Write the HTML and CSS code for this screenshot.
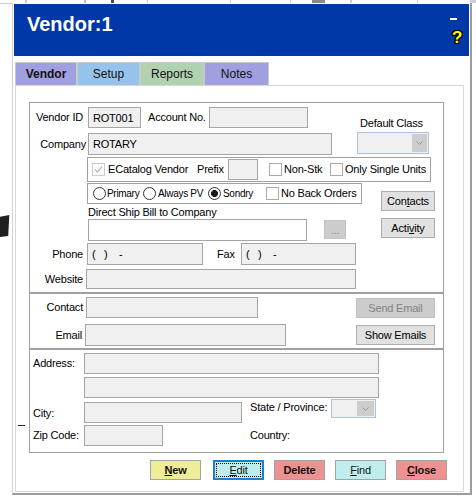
FILE: index.html
```html
<!DOCTYPE html>
<html lang="en">
<head>
<meta charset="utf-8">
<title>Vendor:1</title>
<link rel="stylesheet" href="styles.css">
</head>
<body>
<div class="top-strip"></div>
<div class="stage">
  <div class="gutter">
    <svg class="blot" width="10" height="23" viewBox="0 0 10 23"><polygon points="0,1.7 9.3,0 8.2,21 0,22" fill="#231f20"/></svg>
  </div>
  <div class="window">
    <div class="titlebar">
      <div class="title">Vendor:1</div>
      <div class="title-controls"><span class="minbar"></span><span class="help">?</span></div>
    </div>
    <div class="tabs">
      <div class="tab tab-vendor">Vendor</div>
      <div class="tab tab-setup">Setup</div>
      <div class="tab tab-reports">Reports</div>
      <div class="tab tab-notes">Notes</div>
    </div>
    <div class="panel">
      <div class="margin-col"><span class="stray-dash"></span></div>
      <div class="content">
        <div class="group g1">
          <div class="ab">
            <div class="ab-left">
              <div class="row r-a">
                <span class="lbl lbl-vid">Vendor ID</span>
                <span class="field f-vid">ROT001</span>
                <span class="lbl lbl-acct">Account No.</span>
                <span class="field f-acct"></span>
              </div>
              <div class="row r-b">
                <span class="lbl lbl-company">Company</span>
                <span class="field f-company">ROTARY</span>
              </div>
            </div>
            <div class="ab-right">
              <span class="lbl lbl-class">Default Class</span>
              <span class="combo combo-class"><span class="drop"><svg width="7" height="4" viewBox="0 0 7 4"><polyline points="0.5,0.5 3.5,3.5 6.5,0.5" fill="none" stroke="#9a9a9a" stroke-width="1"/></svg></span></span>
            </div>
          </div>
          <div class="optbox opt-cat">
            <span class="cb cb-dis"><svg width="11" height="11" viewBox="0 0 11 11"><polyline points="2,5.5 4.5,8 9,2.5" fill="none" stroke="#b9b9b9" stroke-width="1.2"/></svg></span>
            <span class="lbl lbl-ecat">ECatalog Vendor</span>
            <span class="lbl lbl-prefix">Prefix</span>
            <span class="field f-prefix"></span>
            <span class="cb cb-nonstk"></span>
            <span class="lbl lbl-nonstk">Non-Stk</span>
            <span class="cb"></span>
            <span class="lbl lbl-single">Only Single Units</span>
          </div>
          <div class="df">
            <div class="df-left">
              <div class="optbox opt-radio">
                <span class="radio r1"></span><span class="lbl small l-primary">Primary</span>
                <span class="radio"></span><span class="lbl small l-always">Always PV</span>
                <span class="radio on"></span><span class="lbl small l-sondry">Sondry</span>
                <span class="cb"></span><span class="lbl l-noback">No Back Orders</span>
              </div>
              <span class="lbl lbl-direct">Direct Ship Bill to Company</span>
              <div class="row r-f">
                <span class="field white f-direct"></span>
                <span class="btn btn-dots">...</span>
              </div>
            </div>
            <div class="df-right">
              <span class="btn btn-side btn-contacts">Con<u>t</u>acts</span>
              <span class="btn btn-side btn-activity">Acti<u>v</u>ity</span>
            </div>
          </div>
          <div class="row r-g">
            <span class="lbl lbl-phone">Phone</span>
            <span class="field f-phone">(   )    -</span>
            <span class="lbl lbl-fax">Fax</span>
            <span class="field f-fax">(   )    -</span>
          </div>
          <div class="row r-h">
            <span class="lbl lbl-web">Website</span>
            <span class="field f-web"></span>
          </div>
        </div>

        <div class="group g2">
          <div class="row r-contact">
            <span class="lbl lbl-contact">Contact</span>
            <span class="field f-contact"></span>
            <span class="btn btn-send">Send Email</span>
          </div>
          <div class="row r-email">
            <span class="lbl lbl-email">Email</span>
            <span class="field f-email"></span>
            <span class="btn btn-show">Show Emails</span>
          </div>
        </div>

        <div class="group g3">
          <div class="row r-addr1">
            <span class="lbl lbl-addr">Address:</span>
            <span class="field f-addr"></span>
          </div>
          <div class="row r-addr2">
            <span class="field f-addr"></span>
          </div>
          <div class="row r-city">
            <span class="lbl lbl-city">City:</span>
            <span class="field f-city"></span>
            <span class="lbl lbl-state">State / Province:</span>
            <span class="combo combo-state"><span class="drop"><svg width="7" height="4" viewBox="0 0 7 4"><polyline points="0.5,0.5 3.5,3.5 6.5,0.5" fill="none" stroke="#9a9a9a" stroke-width="1"/></svg></span></span>
          </div>
          <div class="row r-zip">
            <span class="lbl lbl-zip">Zip Code:</span>
            <span class="field f-zip"></span>
            <span class="lbl lbl-country">Country:</span>
          </div>
        </div>

        <div class="actions">
          <span class="abtn a-new"><u>N</u>ew</span>
          <span class="abtn a-edit"><span class="focus"><u>E</u>dit</span></span>
          <span class="abtn a-delete">Delete</span>
          <span class="abtn a-find"><u>F</u>ind</span>
          <span class="abtn a-close"><u>C</u>lose</span>
        </div>
      </div>
    </div>
  </div>
</div>
</body>
</html>
```

FILE: styles.css
```css
* { box-sizing: border-box; }
html, body { margin: 0; padding: 0; }
body {
  width: 476px;
  height: 502px;
  overflow: hidden;
  background: #fff;
  font-family: "Liberation Sans", Arial, "DejaVu Sans", sans-serif;
  font-size: 11px;
  letter-spacing: -0.2px;
  color: #000;
}

.top-strip {
  height: 3px;
  background: linear-gradient(to right,
    #fff 0 25px, #c9c9c9 25px 27px, #fff 27px 84px, #bdbdbd 84px 86px,
    #fff 86px 111px, #4a4a4a 111px 114px, #fff 114px 147px, #cfcfcf 147px 148px,
    #fff 148px 230px, #cfcfcf 230px 231px, #fff 231px 290px, #cfcfcf 290px 291px,
    #fff 291px 312px, #8a8a8a 312px 325px, #fff 325px 350px, #cfcfcf 350px 352px,
    #fff 352px 417px, #cfcfcf 417px 418px, #fff 418px 470px, #cfcfcf 470px 476px);
}

.stage { display: flex; }
.gutter { width: 12px; flex: none; border-top: 1px solid #d0d0d0; }
.blot { display: block; margin-top: 211px; }

.window {
  width: 460px;
  height: 492px;
  flex: none;
  border-left: 1px solid #d2d2d2;
  border-right: 2px solid #9c9c9c;
  border-bottom: 2px solid #9c9c9c;
  padding: 1px;
  background: #fff;
}

.titlebar {
  height: 52px;
  background: #0038a8;
  display: flex;
  justify-content: space-between;
  color: #fff;
}
.title {
  padding: 8px 0 0 13px;
  font-size: 20px;
  line-height: 24px;
  font-weight: bold;
  letter-spacing: 0;
}
.title-controls {
  width: 14px;
  margin-right: 5px;
  padding-top: 14px;
  display: flex;
  flex-direction: column;
  align-items: flex-start;
}
.minbar { width: 7px; height: 2px; background: #fff; }
.help {
  margin-top: 9px;
  margin-left: 2px;
  font-size: 17px;
  line-height: 18px;
  font-weight: bold;
  letter-spacing: 0;
  color: #ffff00;
  text-shadow: 1px 0 0 #000, -1px 0 0 #000, 0 1px 0 #000, 0 -1px 0 #000,
               1px 1px 0 #000, -1px -1px 0 #000, 1px -1px 0 #000, -1px 1px 0 #000;
}

.tabs { display: flex; margin: 6px 0 0 1px; height: 23px; }
.tab {
  height: 23px;
  border: 1px solid #c9c9c9;
  border-bottom: none;
  display: flex;
  align-items: center;
  justify-content: center;
  font-size: 12px;
  letter-spacing: 0;
  color: #111;
}
.tab-vendor { width: 62px; background: #a09fe0; font-weight: bold; }
.tab-setup { width: 63px; background: #95c3ec; }
.tab-reports { width: 64px; background: #b1d2b1; }
.tab-notes { width: 65px; background: #a09fe0; }

.panel {
  margin-left: 1px;
  width: 449px;
  height: 407px;
  border: 1px solid #d9d9d9;
  display: flex;
}
.margin-col { width: 13px; flex: none; }
.stray-dash { display: block; width: 7px; height: 1px; background: #222; margin: 339px 0 0 2px; }
.content { flex: 1; padding-top: 16px; display: flex; flex-direction: column; }

.group {
  width: 415px;
  flex: none;
  border: 1px solid #a0a0a0;
  display: flex;
  flex-direction: column;
}
.g1 { height: 191px; }
.g2 { height: 56px; }
.g3 { height: 104px; }

.row { display: flex; align-items: center; flex: none; }
.lbl { line-height: 13px; white-space: nowrap; flex: none; }
.small { font-size: 10px; letter-spacing: -0.3px; }

.field {
  flex: none;
  border: 1px solid #a5a5a5;
  background: #f0f0f0;
  padding-left: 4px;
  display: flex;
  align-items: center;
  white-space: pre;
}
.field.white { background: #fff; }

.combo {
  display: flex;
  justify-content: flex-end;
  border: 1px solid #a9c4e1;
  background: #f0f0f0;
  padding: 1px;
  flex: none;
}
.drop { width: 15px; background: #cdcdcd; display: flex; align-items: center; justify-content: center; }
.combo-state .drop { width: 17px; }

.cb {
  width: 13px;
  height: 13px;
  border: 1px solid #a9a9a9;
  background: #fff;
  flex: none;
  display: flex;
}
.cb-dis { border-color: #cccccc; margin-left: 4px; }
.radio {
  width: 13px;
  height: 13px;
  border-radius: 50%;
  border: 1px solid #333;
  background: #fff;
  flex: none;
}
.radio.on { background: radial-gradient(circle, #1b1b1b 0 3.2px, #fff 3.8px); }

.btn {
  display: flex;
  align-items: center;
  justify-content: center;
  border: 1px solid #adadad;
  background: #e1e1e1;
  flex: none;
  white-space: nowrap;
}

/* group 1 */
.ab { display: flex; margin-top: 4px; flex: none; }
.ab-left { width: 302px; }
.r-a { height: 21px; }
.lbl-vid { width: 58px; text-align: right; padding-right: 5px; }
.f-vid { width: 53px; height: 21px; }
.lbl-acct { margin-left: 7px; width: 61px; }
.f-acct { width: 99px; height: 21px; }
.r-b { height: 22px; margin-top: 5px; }
.lbl-company { width: 58px; text-align: right; padding-right: 2px; }
.f-company { width: 244px; height: 22px; }
.ab-right { margin-left: 25px; display: flex; flex-direction: column; align-items: flex-start; }
.lbl-class { margin-top: 9px; padding-left: 3px; line-height: 14px; }
.combo-class { margin-top: 2px; width: 72px; height: 22px; }

.optbox { display: flex; align-items: center; border: 1px solid #a0a0a0; background: #fff; flex: none; }
.opt-cat { margin: 2px 0 0 57px; width: 344px; height: 25px; }
.lbl-ecat { margin-left: 3px; width: 89px; }
.lbl-prefix { width: 31px; }
.f-prefix { width: 30px; height: 21px; }
.cb-nonstk { margin-left: 11px; }
.lbl-nonstk { margin-left: 2px; width: 46px; }
.lbl-single { margin-left: 2px; }

.df { display: flex; margin-top: 1px; flex: none; }
.df-left { width: 332px; display: flex; flex-direction: column; align-items: flex-start; }
.opt-radio { margin-left: 57px; width: 275px; height: 21px; }
.r1 { margin-left: 5px; }
.l-primary { margin-left: 1px; width: 36px; }
.l-always { margin-left: 2px; width: 50px; }
.l-sondry { margin-left: 2px; width: 43px; }
.l-noback { margin-left: 2px; }
.lbl-direct { margin: 2px 0 0 58px; }
.r-f { height: 22px; align-items: flex-start; }
.f-direct { margin-left: 58px; width: 219px; height: 22px; }
.btn-dots {
  margin: 1px 0 0 17px;
  width: 22px;
  height: 19px;
  background: #cccccc;
  border-color: #c4c4c4;
  color: #8c8c8c;
  align-items: flex-end;
  padding-bottom: 3px;
  line-height: 10px;
}
.df-right { margin-left: 19px; display: flex; flex-direction: column; }
.btn-side { width: 54px; height: 20px; }
.btn-contacts { margin-top: 8px; }
.btn-activity { margin-top: 7px; }

.r-g { margin-top: 2px; height: 22px; }
.lbl-phone { width: 57px; text-align: right; padding-right: 4px; }
.f-phone { width: 116px; height: 22px; }
.lbl-fax { margin-left: 14px; width: 24px; }
.f-fax { width: 115px; height: 22px; }
.r-h { margin-top: 4px; height: 20px; }
.lbl-web { width: 56px; text-align: right; padding-right: 3px; }
.f-web { width: 270px; height: 20px; }

/* group 2 */
.r-contact { margin-top: 3px; height: 21px; }
.lbl-contact { width: 56px; text-align: right; padding-right: 3px; }
.f-contact { width: 172px; height: 21px; }
.btn-send {
  margin-left: 98px;
  width: 79px;
  height: 20px;
  background: #cccccc;
  border-color: #bfbfbf;
  color: #838383;
}
.r-email { margin-top: 6px; height: 22px; }
.lbl-email { width: 55px; text-align: right; padding-right: 3px; }
.f-email { width: 201px; height: 22px; }
.btn-show { margin-left: 70px; width: 79px; height: 20px; }

/* group 3 */
.r-addr1 { margin-top: 3px; height: 21px; }
.lbl-addr { width: 54px; padding-left: 3px; }
.f-addr { width: 295px; height: 21px; }
.r-addr2 { margin-top: 3px; height: 21px; padding-left: 54px; }
.r-city { margin-top: 1px; height: 24px; align-items: flex-start; }
.lbl-city { width: 54px; padding-left: 3px; margin-top: 8px; }
.f-city { margin-top: 3px; width: 158px; height: 21px; }
.lbl-state { margin: 2px 0 0 8px; width: 81px; }
.combo-state { width: 45px; height: 19px; }
.r-zip { margin-top: 2px; height: 21px; }
.lbl-zip { width: 54px; padding-left: 3px; }
.f-zip { width: 79px; height: 21px; }
.lbl-country { margin-left: 87px; }

/* action buttons */
.actions { display: flex; margin: 7px 0 0 121px; flex: none; }
.abtn {
  width: 51px;
  height: 20px;
  border: 1px solid #a3a3a3;
  display: flex;
  align-items: center;
  justify-content: center;
  flex: none;
  color: #111;
}
.a-new { background: #eeee99; font-weight: bold; }
.a-edit { margin-left: 12px; background: #bfecec; border: 2px solid #1a7fd6; padding: 1px; }
.a-edit .focus {
  flex: 1;
  align-self: stretch;
  border: 1px dotted #000;
  display: flex;
  align-items: center;
  justify-content: center;
}
.a-delete { margin-left: 10px; background: #ee9191; font-weight: bold; }
.a-find { margin-left: 10px; background: #bfeeee; }
.a-close { margin-left: 10px; background: #ee9191; font-weight: bold; }
```
